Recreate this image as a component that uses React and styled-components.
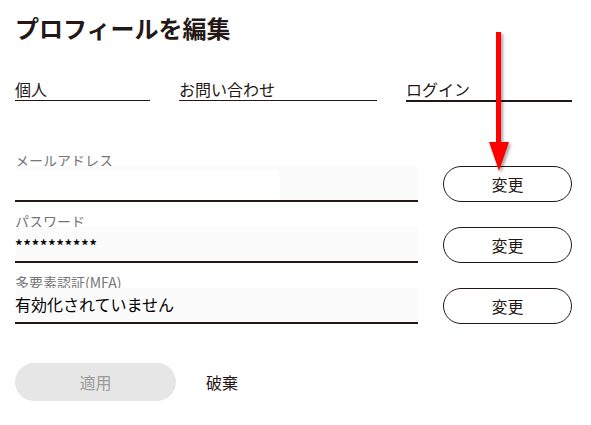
import styled, { createGlobalStyle } from 'styled-components';

const GlobalStyle = createGlobalStyle`
  body {
    margin: 0;
    background: #fff;
    font-family: "Noto Sans CJK JP", "Noto Sans", sans-serif;
    color: #231815;
  }
`;

const Page = styled.main`
  position: relative;
  width: 591px;
  padding: 16px 19px 24px 15px;
  box-sizing: border-box;
`;

const Title = styled.h1`
  margin: 0;
  font-size: 24px;
  line-height: 24px;
  font-weight: 700;
  color: #231815;
`;

const Tabs = styled.nav`
  display: flex;
  align-items: flex-start;
  gap: 29px;
  margin-top: 41px;
`;

const Tab = styled.div`
  width: ${(props) => props.width}px;
  font-size: 16px;
  line-height: 16px;
  padding-bottom: 3px;
  color: #231815;
  border-bottom: ${(props) => (props.$active ? 2 : 1)}px solid #231815;
`;

const Form = styled.section`
  display: flex;
  flex-direction: column;
  gap: 14px;
  margin-top: 53px;
`;

const Row = styled.div`
  display: grid;
  grid-template-columns: 403px 129px;
  column-gap: 25px;
  align-items: end;
`;

const Field = styled.div`
  display: flex;
  flex-direction: column;
`;

const Label = styled.label`
  font-size: 14px;
  line-height: 11px;
  color: #767676;
`;

const Box = styled.div`
  height: 34px;
  box-sizing: content-box;
  background: #fbfbfb;
  border-bottom: 2px solid #231815;
  display: flex;
  flex-direction: column;
`;

const Value = styled.span`
  margin-top: ${(props) => props.offset}px;
  font-size: 16px;
  line-height: 16px;
  font-weight: ${(props) => props.weight || 400};
  letter-spacing: ${(props) => props.spacing || 0}px;
  color: #000;
`;

const BlankInput = styled.div`
  width: 264px;
  height: 30px;
  margin-top: 4px;
  background: #fff;
`;

const ChangeButton = styled.button`
  height: 36px;
  border: 1px solid #231815;
  border-radius: 18px;
  background: #fff;
  font-family: inherit;
  font-size: 16px;
  color: #231815;
  cursor: pointer;
`;

const Actions = styled.div`
  display: flex;
  align-items: center;
  gap: 30px;
  margin-top: 39px;
`;

const ApplyButton = styled.button`
  width: 161px;
  height: 38px;
  border: none;
  border-radius: 19px;
  background: #e6e6e6;
  color: #9c9c9c;
  font-family: inherit;
  font-size: 16px;
`;

const TextButton = styled.button`
  padding: 0;
  border: none;
  background: none;
  font-family: inherit;
  font-size: 16px;
  color: #231815;
  cursor: pointer;
`;

// red pointer laid over the tabs, pointing at the first change button
const Pointer = styled.svg`
  position: absolute;
  left: 487px;
  top: 30px;
  filter: drop-shadow(2px 2px 1.5px rgba(0, 0, 0, 0.35));
`;

const fields = [
  { label: 'メールアドレス', blank: true },
  { label: 'パスワード', value: '**********', offset: 10, spacing: 0.5, weight: 500 },
  { label: '多要素認証(MFA)', value: '有効化されていません', offset: 8 },
];

function App() {
  return (
    <Page>
      <GlobalStyle />
      <Title>プロフィールを編集</Title>
      <Tabs>
        <Tab width={135}>個人</Tab>
        <Tab width={198}>お問い合わせ</Tab>
        <Tab width={166} $active>
          ログイン
        </Tab>
      </Tabs>
      <Form>
        {fields.map((f) => (
          <Row key={f.label}>
            <Field>
              <Label>{f.label}</Label>
              <Box>
                {f.blank ? (
                  <BlankInput />
                ) : (
                  <Value offset={f.offset} spacing={f.spacing} weight={f.weight}>
                    {f.value}
                  </Value>
                )}
              </Box>
            </Field>
            <ChangeButton>変更</ChangeButton>
          </Row>
        ))}
      </Form>
      <Actions>
        <ApplyButton disabled>適用</ApplyButton>
        <TextButton>破棄</TextButton>
      </Actions>
      <Pointer width="26" height="146" viewBox="0 0 26 146">
        <rect x="9" y="2" width="5" height="112" fill="#ff0000" />
        <polygon points="2,112 22,112 12,141" fill="#ff0000" />
      </Pointer>
    </Page>
  );
}

export default App;
